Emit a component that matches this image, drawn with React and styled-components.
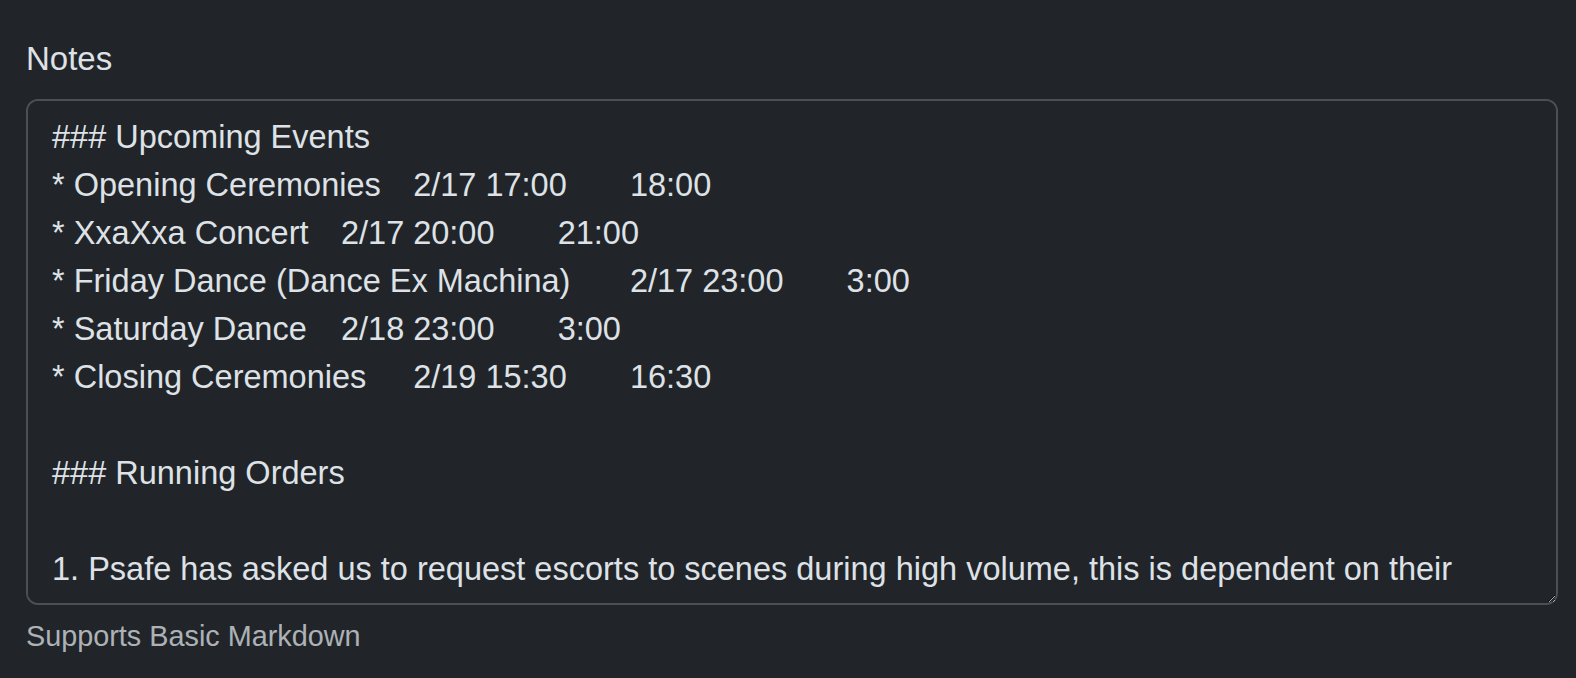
import React from 'react';
import styled, { createGlobalStyle } from 'styled-components';

const notes = [
  '### Upcoming Events',
  '* Opening Ceremonies\t2/17\t17:00\t18:00',
  '* XxaXxa Concert\t2/17\t20:00\t21:00',
  '* Friday Dance (Dance Ex Machina)\t2/17\t23:00\t3:00',
  '* Saturday Dance\t2/18\t23:00\t3:00',
  '* Closing Ceremonies\t2/19\t15:30\t16:30',
  '',
  '### Running Orders',
  '',
  '1. Psafe has asked us to request escorts to scenes during high volume, this is dependent on their staffing levels and availability at the time of the request.',
  '2. Keep the radio channel clear during the dances.',
].join('\n');

const GlobalStyle = createGlobalStyle`
  html, body {
    margin: 0;
    padding: 0;
    background: #212529;
  }
  body {
    font-family: "Liberation Sans", Arial, sans-serif;
    color: #dee2e6;
  }
`;

const Page = styled.div`
  padding: 35px 18px 0 26px;
  min-height: 678px;
  box-sizing: border-box;
`;

const Field = styled.div`
  display: flex;
  flex-direction: column;
`;

const Label = styled.label`
  font-size: 33px;
  line-height: 48px;
  margin-bottom: 16px;
  color: #dee2e6;
`;

const NotesArea = styled.textarea`
  box-sizing: border-box;
  width: 100%;
  height: 506px;
  padding: 12px 24px;
  font-family: "Liberation Sans", Arial, sans-serif;
  font-size: 32.5px;
  line-height: 48px;
  color: #dee2e6;
  background: #212529;
  border: 2px solid #495057;
  border-radius: 12px;
  outline: none;
  tab-size: 8;
  resize: vertical;
  scrollbar-width: none;

  &::-webkit-scrollbar {
    display: none;
  }
`;

const Help = styled.div`
  margin-top: 10px;
  font-size: 28.8px;
  line-height: 42px;
  color: rgba(222, 226, 230, 0.75);
`;

export default function App() {
  return (
    <Page>
      <GlobalStyle />
      <Field>
        <Label htmlFor="notes">Notes</Label>
        <NotesArea id="notes" defaultValue={notes} spellCheck={false} />
        <Help>Supports Basic Markdown</Help>
      </Field>
    </Page>
  );
}
